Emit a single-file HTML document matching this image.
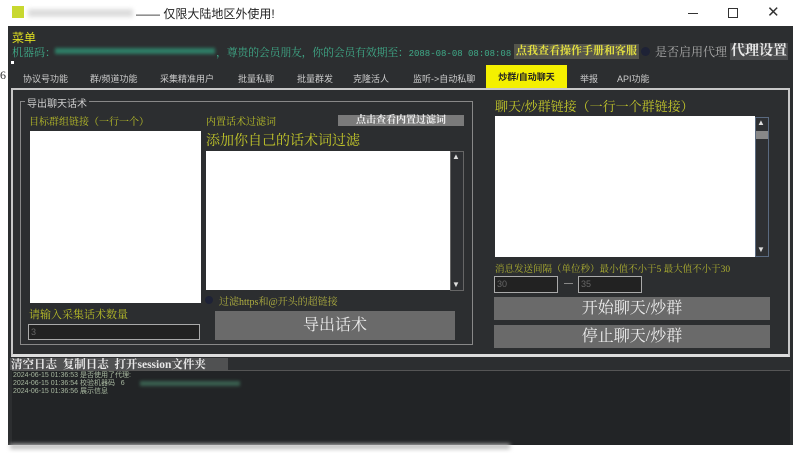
<!DOCTYPE html>
<html><head><meta charset="utf-8"><style>
*{margin:0;padding:0;box-sizing:border-box}
body{width:800px;height:453px;background:#fff;position:relative;overflow:hidden;font-family:"Liberation Serif","Noto Serif CJK SC",serif}
.a{position:absolute;white-space:nowrap}
.s{font-family:"Liberation Sans","Noto Sans CJK SC",sans-serif}
.y{color:#b9be28}
.ta{background:#fff;position:absolute}
.sb{position:absolute;background:#2e3033;border:1px solid #666}
.btn{position:absolute;background:#6a6a6a;color:#ececec;text-align:center}
.inp{position:absolute;background:#222;border:1px solid #aaa;color:#666;font-size:9px;padding-left:2px;font-family:"Liberation Sans",sans-serif}
</style></head><body>
<div class="a" style="left:12px;top:6px;width:12px;height:12px;background:#c8d830"></div>
<div class="a" style="left:28px;top:9px;width:105px;height:8px;background:#ddd;filter:blur(2px)"></div>
<div class="a s" style="left:136px;top:5px;font-size:12px;color:#222">—— 仅限大陆地区外使用!</div>
<div class="a" style="left:688px;top:13px;width:10px;height:1px;background:#333"></div>
<div class="a" style="left:728px;top:8px;width:10px;height:10px;border:1px solid #333"></div>
<div class="a s" style="left:767px;top:3px;font-size:15px;color:#333">✕</div>
<div class="a" style="left:0;top:68px;font-size:12px;color:#333">6</div>
<div class="a" style="left:8px;top:26px;width:785px;height:419px;background:#2c2e30"></div>
<div class="a s" style="left:12px;top:29px;font-size:12px;color:#e0e020">菜单</div>
<div class="a" style="left:12px;top:44px;font-size:11px;color:#3faa88">机器码：</div>
<div class="a" style="left:55px;top:48px;width:160px;height:6px;background:#2f7d66;filter:blur(1.5px)"></div>
<div class="a" style="left:216px;top:44px;font-size:11px;color:#3faa88;letter-spacing:-0.3px">，尊贵的会员朋友，你的会员有效期至：<span style="font-family:'Liberation Mono',monospace;font-size:9px;letter-spacing:0">2088-08-08 08:08:08</span></div>
<div class="a" style="left:514px;top:44px;height:15px;padding:0 2px;background:#55554c;color:#e4e040;font-size:11px;font-weight:bold;line-height:15px">点我查看操作手册和客服</div>
<div class="a" style="left:641px;top:47px;width:9px;height:9px;border-radius:50%;background:#1e2236"></div>
<div class="a" style="left:655px;top:43px;font-size:12px;color:#aaa">是否启用代理</div>
<div class="a" style="left:730px;top:43px;height:17px;padding:0 1px;background:#4a4b4d;color:#e8e8e8;font-size:14px;font-weight:bold;line-height:17px">代理设置</div>
<div class="a" style="left:11px;top:61px;width:3px;height:3px;background:#fff"></div>
<div class="a s" style="left:23px;top:72px;font-size:9px;color:#ccc">协议号功能</div>
<div class="a s" style="left:90px;top:72px;font-size:9px;color:#ccc">群/频道功能</div>
<div class="a s" style="left:160px;top:72px;font-size:9px;color:#ccc">采集精准用户</div>
<div class="a s" style="left:238px;top:72px;font-size:9px;color:#ccc">批量私聊</div>
<div class="a s" style="left:297px;top:72px;font-size:9px;color:#ccc">批量群发</div>
<div class="a s" style="left:353px;top:72px;font-size:9px;color:#ccc">克隆活人</div>
<div class="a s" style="left:413px;top:72px;font-size:9px;color:#ccc">监听->自动私聊</div>
<div class="a s" style="left:486px;top:65px;width:81px;height:24px;background:#f4f000;font-size:9px;color:#222;font-weight:bold;text-align:center;line-height:24px">炒群/自动聊天</div>
<div class="a s" style="left:580px;top:72px;font-size:9px;color:#ccc">举报</div>
<div class="a s" style="left:617px;top:72px;font-size:9px;color:#ccc">API功能</div>
<div class="a" style="left:11px;top:88px;width:779px;height:269px;border:2px solid #c8c8c8;border-bottom:3px solid #ddd"></div>
<div class="a" style="left:20px;top:101px;width:453px;height:244px;border:1px solid #888"></div>
<div class="a s" style="left:25px;top:95px;padding:0 2px;background:#2c2e30;font-size:10px;color:#ccc">导出聊天话术</div>
<div class="a y" style="left:29px;top:113px;font-size:10px">目标群组链接（一行一个）</div>
<div class="ta" style="left:30px;top:131px;width:171px;height:172px"></div>
<div class="a y" style="left:206px;top:113px;font-size:10px">内置话术过滤词</div>
<div class="a" style="left:338px;top:115px;width:126px;height:11px;background:#7a7a7a;color:#eee;font-size:10px;font-weight:bold;line-height:11px;text-align:center">点击查看内置过滤词</div>
<div class="a y" style="left:206px;top:130px;font-size:14px;color:#c4c82a">添加你自己的话术词过滤</div>
<div class="ta" style="left:206px;top:151px;width:244px;height:139px"></div>
<div class="sb" style="left:450px;top:151px;width:14px;height:140px"></div>
<div class="a" style="left:452px;top:152px;color:#ddd;font-size:8px">▲</div>
<div class="a" style="left:452px;top:280px;color:#ddd;font-size:8px">▼</div>
<div class="a" style="left:205px;top:296px;width:8px;height:8px;border-radius:50%;background:#1e2236"></div>
<div class="a y" style="left:219px;top:293px;font-size:10px;color:#b0b040">过滤https和@开头的超链接</div>
<div class="a y" style="left:29px;top:306px;font-size:11px">请输入采集话术数量</div>
<div class="inp" style="left:28px;top:324px;width:172px;height:16px;line-height:14px">3</div>
<div class="btn" style="left:215px;top:311px;width:240px;height:29px;font-size:16px;line-height:29px">导出话术</div>
<div class="a y" style="left:495px;top:96px;font-size:13px;color:#c4c82a">聊天/炒群链接（一行一个群链接）</div>
<div class="ta" style="left:495px;top:116px;width:260px;height:141px"></div>
<div class="sb" style="left:755px;top:117px;width:14px;height:140px;border-color:#5a6a80"></div>
<div class="a" style="left:756px;top:131px;width:12px;height:8px;background:#888"></div>
<div class="a" style="left:757px;top:118px;color:#ddd;font-size:8px">▲</div>
<div class="a" style="left:757px;top:245px;color:#ddd;font-size:8px">▼</div>
<div class="a y" style="left:495px;top:261px;font-size:9.5px;color:#aeb030">消息发送间隔（单位秒）最小值不小于5 最大值不小于30</div>
<div class="inp" style="left:494px;top:276px;width:64px;height:17px;line-height:15px">30</div>
<div class="a" style="left:564px;top:283px;width:9px;height:1px;background:#888"></div>
<div class="inp" style="left:578px;top:276px;width:64px;height:17px;line-height:15px">35</div>
<div class="btn" style="left:494px;top:297px;width:276px;height:23px;font-size:16px;line-height:23px">开始聊天/炒群</div>
<div class="btn" style="left:494px;top:325px;width:276px;height:23px;font-size:16px;line-height:23px">停止聊天/炒群</div>
<div class="a" style="left:10px;top:358px;width:218px;height:12px;background:#505152"></div>
<div class="a" style="left:11px;top:356px;font-size:11.5px;font-weight:bold;color:#e8e8e8">清空日志&nbsp;&nbsp;复制日志&nbsp;&nbsp;打开session文件夹</div>
<div class="a" style="left:12px;top:370px;width:778px;height:75px;background:#222426;border-top:1px solid #555"></div>
<div class="a s" style="left:13px;top:372px;font-size:7px;line-height:8px;color:#a8b8a0">2024-06-15 01:36:53 是否使用了代理:<br>2024-06-15 01:36:54 校验机器码&nbsp;&nbsp;&nbsp;6<br>2024-06-15 01:36:56 展示信息</div>
<div class="a" style="left:140px;top:381px;width:100px;height:5px;background:#3a6050;filter:blur(1.5px)"></div>
<div class="a" style="left:0;top:445px;width:800px;height:8px;background:#fff"></div>
<div class="a" style="left:10px;top:444px;width:500px;height:5px;background:#bbb;filter:blur(2px)"></div>
</body></html>
